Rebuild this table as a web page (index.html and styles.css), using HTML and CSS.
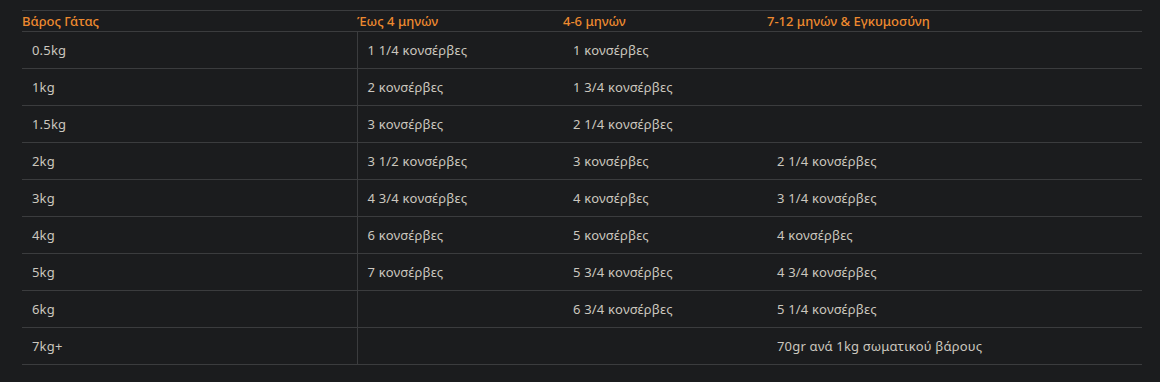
FILE: index.html
```html
<!DOCTYPE html>
<html lang="el">
<head>
<meta charset="utf-8">
<link rel="stylesheet" href="styles.css">
</head>
<body>
<div class="wrap">
<table class="feed">
<colgroup>
<col class="c1"><col class="c2"><col class="c3"><col class="c4">
</colgroup>
<thead>
<tr><th>Βάρος Γάτας</th><th>Έως 4 μηνών</th><th>4-6 μηνών</th><th>7-12 μηνών &amp; Εγκυμοσύνη</th></tr>
</thead>
<tbody>
<tr><td>0.5kg</td><td>1 1/4 κονσέρβες</td><td>1 κονσέρβες</td><td></td></tr>
<tr><td>1kg</td><td>2 κονσέρβες</td><td>1 3/4 κονσέρβες</td><td></td></tr>
<tr><td>1.5kg</td><td>3 κονσέρβες</td><td>2 1/4 κονσέρβες</td><td></td></tr>
<tr><td>2kg</td><td>3 1/2 κονσέρβες</td><td>3 κονσέρβες</td><td>2 1/4 κονσέρβες</td></tr>
<tr><td>3kg</td><td>4 3/4 κονσέρβες</td><td>4 κονσέρβες</td><td>3 1/4 κονσέρβες</td></tr>
<tr><td>4kg</td><td>6 κονσέρβες</td><td>5 κονσέρβες</td><td>4 κονσέρβες</td></tr>
<tr><td>5kg</td><td>7 κονσέρβες</td><td>5 3/4 κονσέρβες</td><td>4 3/4 κονσέρβες</td></tr>
<tr><td>6kg</td><td></td><td>6 3/4 κονσέρβες</td><td>5 1/4 κονσέρβες</td></tr>
<tr><td>7kg+</td><td></td><td></td><td>70gr ανά 1kg σωματικού βάρους</td></tr>
</tbody>
</table>
</div>
</body>
</html>
```
FILE: styles.css
```css
html, body {
  margin: 0;
  padding: 0;
  background: #1b1c1e;
}
body {
  font-family: "Noto Sans", "DejaVu Sans", sans-serif;
  font-size: 13px;
  letter-spacing: 0.18px;
  color: #cbc7bf;
}
.wrap {
  padding: 10px 18px 0 22px;
}
.feed {
  width: 1120px;
  border-collapse: collapse;
  table-layout: fixed;
}
.c1 { width: 335px; }
.c2 { width: 206px; }
.c3 { width: 204px; }
.c4 { width: 375px; }
.feed th {
  text-align: left;
  font-size: 13px;
  letter-spacing: 0;
  font-weight: 500;
  color: #ee8a2f;
  height: 20px;
  padding: 0;
  border-top: 1px solid #3b3c3e;
  border-bottom: 1px solid #3b3c3e;
  line-height: 18px;
  white-space: nowrap;
}
.feed td {
  height: 36px;
  padding: 0 0 0 10px;
  border-bottom: 1px solid #3b3c3e;
  line-height: 18px;
  white-space: nowrap;
}
.feed td:first-child {
  border-right: 1px solid #3b3c3e;
}
```
